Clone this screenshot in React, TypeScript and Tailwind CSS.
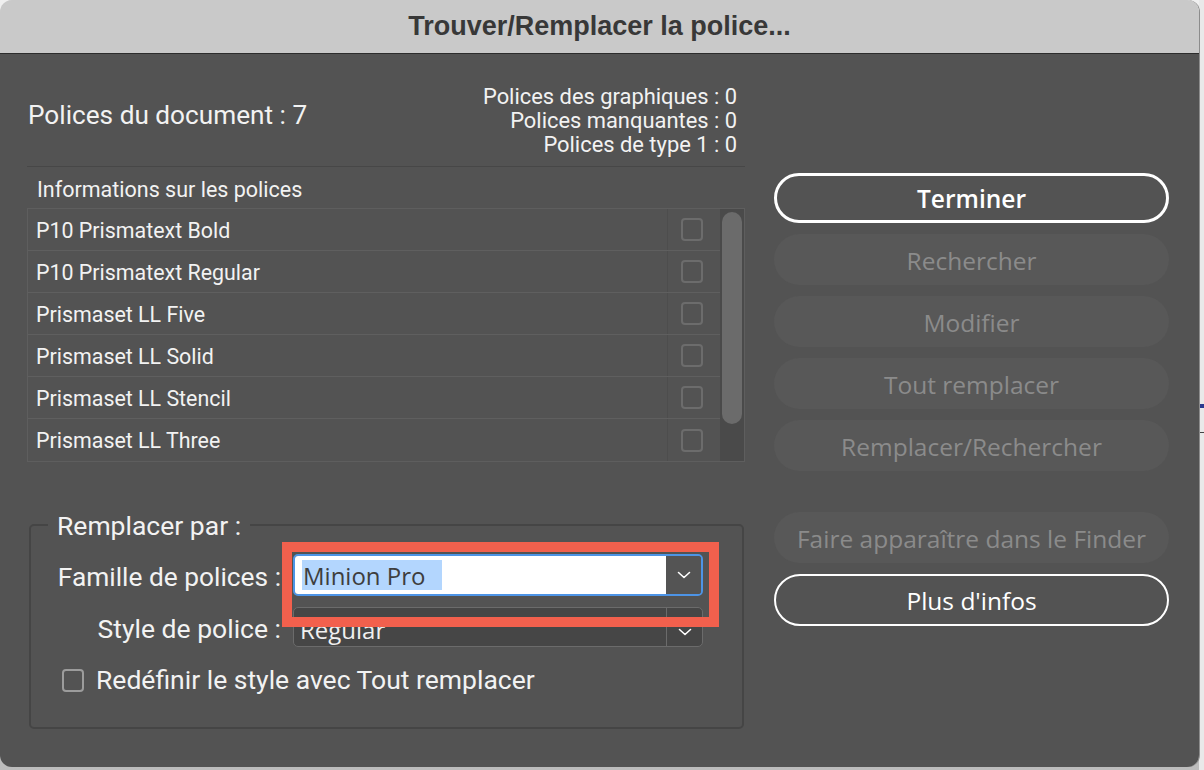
import { ReactNode } from "react";

const fonts = ["P10 Prismatext Bold", "P10 Prismatext Regular", "Prismaset LL Five", "Prismaset LL Solid", "Prismaset LL Stencil", "Prismaset LL Three"];

function Chevron({ className = "" }: { className?: string }) {
  return (
    <svg width="14" height="8" viewBox="0 0 14 8" className={className} fill="none">
      <path d="M1.5 1.5l5.5 5 5.5-5" stroke="currentColor" strokeWidth="1.6" strokeLinecap="round" strokeLinejoin="round" />
    </svg>
  );
}

function SideButton({ children, variant = "disabled" }: { children: ReactNode; variant?: "default" | "outline" | "disabled" }) {
  if (variant === "default") {
    return (
      <div className="flex h-[50px] items-center justify-center rounded-full border-[3px] border-white pt-[3px] text-[24.5px] font-semibold text-white">
        {children}
      </div>
    );
  }
  if (variant === "outline") {
    return (
      <div className="flex h-[52px] items-center justify-center rounded-full border-2 border-white pt-[2px] text-[24.5px] text-white">
        {children}
      </div>
    );
  }
  return (
    <div className="flex h-[51px] items-center justify-center rounded-full bg-[#585858] pt-[3px] text-[24.5px] text-[#8b8b8b]">
      {children}
    </div>
  );
}

export default function App() {
  return (
    <div className="flex h-[770px] w-[1204px] overflow-hidden bg-linear-to-b from-[#f0f0f0] to-[#bcbcbc] font-['Roboto',sans-serif]">
      <div className="relative flex h-[767px] w-[1199px] shrink-0 flex-col overflow-hidden rounded-[12px] shadow-[1px_0_0_#8c8c8c]">
        {/* title bar */}
        <div className="flex h-[54px] shrink-0 items-center justify-center border-b border-[#2c2c2c] bg-[#c9c9c9] pb-[1px]">
          <span className="font-['Liberation_Sans',sans-serif] text-[27px] font-bold text-[#383838]">Trouver/Remplacer la police...</span>
        </div>

        <div className="flex flex-1 bg-[#535353] pl-[27px]">
          {/* left column */}
          <div className="flex w-[718px] flex-col">
            <div className="flex items-start justify-between pl-[1px] pr-[8px] pt-[31px]">
              <div className="mt-[15px] text-[26.2px] leading-[30px] text-[#f2f2f2]">Polices du document : 7</div>
              <div className="text-right text-[21.9px] leading-[24px] text-[#f2f2f2]">
                <div>Polices des graphiques : 0</div>
                <div>Polices manquantes : 0</div>
                <div>Polices de type 1 : 0</div>
              </div>
            </div>
            <div className="mt-[9px] h-px bg-[#474747]" />
            <div className="mt-[11px] h-[24px] pl-[10px] text-[21.5px] leading-[24px] text-[#f2f2f2]">Informations sur les polices</div>

            <div className="mt-[6px] flex border border-[#5e5e5e]">
              <div className="flex-1">
                {fonts.map((f) => (
                  <div key={f} className="flex h-[42px] border-b border-[#5f5f5f] last:border-b-0">
                    <div className="flex flex-1 items-center pl-[8px] pt-[3px] text-[21.4px] text-[#f2f2f2]">{f}</div>
                    <div className="flex w-[53px] items-center border-l border-[#4d4d4d] pl-[13px]">
                      <div className="h-[23px] w-[22px] rounded-[4px] border-2 border-[#6c6c6c]" />
                    </div>
                  </div>
                ))}
              </div>
              <div className="w-[24px] bg-[#4a4a4a] px-[2px] pt-[3px]">
                <div className="h-[212px] rounded-full bg-[#6b6b6b]" />
              </div>
            </div>

            <fieldset className="ml-[2px] mt-[47px] w-[715px] rounded-[5px] border-2 border-[#454545] pb-[32px] pl-[17px]">
              <legend className="px-[9px] pt-[2px] text-[26.5px] leading-[30px] text-[#f2f2f2]">Remplacer par :</legend>
              <div className="mt-[13px] flex items-center">
                <div className="w-[233px] pt-[4px] text-right text-[26.3px] leading-[30px] text-[#f2f2f2]">Famille de polices :</div>
                <div className="ml-[12px] flex h-[42px] w-[410px] overflow-hidden rounded-[5px] border-2 border-[#4d94e6]">
                  <div className="flex flex-1 items-center bg-white pl-[7px]">
                    <span className="flex h-[30px] w-[140px] items-center bg-[#b3d6fe] pl-[1px] pt-[2px] font-['Open_Sans',sans-serif] text-[24px] text-[#3e3e3e]">
                      Minion Pro
                    </span>
                  </div>
                  <div className="flex w-[35px] items-center justify-center bg-[#545454] text-white">
                    <Chevron />
                  </div>
                </div>
              </div>
              <div className="mt-[11px] flex items-center">
                <div className="w-[233px] pt-[4px] text-right text-[26.5px] leading-[30px] text-[#f2f2f2]">Style de police :</div>
                <div className="ml-[12px] flex h-[40px] w-[410px] overflow-hidden rounded-[5px] border border-[#6b6b6b] bg-[#464646]">
                  <div className="flex flex-1 items-center pl-[6px] pt-[5px] font-['Open_Sans',sans-serif] text-[24px] text-[#f0f0f0]">Regular</div>
                  <div className="flex w-[36px] items-center justify-center border-l border-[#6b6b6b] pt-[10px] text-white">
                    <Chevron />
                  </div>
                </div>
              </div>
              <div className="mt-[18px] flex h-[30px] items-center pl-[14px]">
                <div className="h-[23px] w-[22px] rounded-[4px] border-2 border-[#9c9c9c]" />
                <span className="ml-[12px] text-[26.5px] leading-[30px] text-[#f2f2f2]">Redéfinir le style avec Tout remplacer</span>
              </div>
            </fieldset>
          </div>

          {/* right column */}
          <div className="ml-[29px] flex w-[395px] flex-col pt-[119px] font-['Open_Sans',sans-serif]">
            <SideButton variant="default">Terminer</SideButton>
            <div className="mt-[11px]"><SideButton>Rechercher</SideButton></div>
            <div className="mt-[11px]"><SideButton>Modifier</SideButton></div>
            <div className="mt-[11px]"><SideButton>Tout remplacer</SideButton></div>
            <div className="mt-[11px]"><SideButton>Remplacer/Rechercher</SideButton></div>
            <div className="mt-[41px]"><SideButton>Faire apparaître dans le Finder</SideButton></div>
            <div className="mt-[11px]"><SideButton variant="outline">Plus d'infos</SideButton></div>
          </div>
        </div>

        {/* annotation highlight */}
        <div className="absolute left-[282px] top-[542px] h-[85px] w-[437px] border-[10px] border-[#f2604d]" />
      </div>

      {/* sliver of the app behind */}
      <div className="flex flex-1 flex-col bg-[#e9e9e9]">
        <div className="h-[404px]" />
        <div className="h-[4px] bg-[#2b3a8f]" />
        <div className="h-[24px]" />
        <div className="h-px bg-[#444]" />
      </div>
    </div>
  );
}
